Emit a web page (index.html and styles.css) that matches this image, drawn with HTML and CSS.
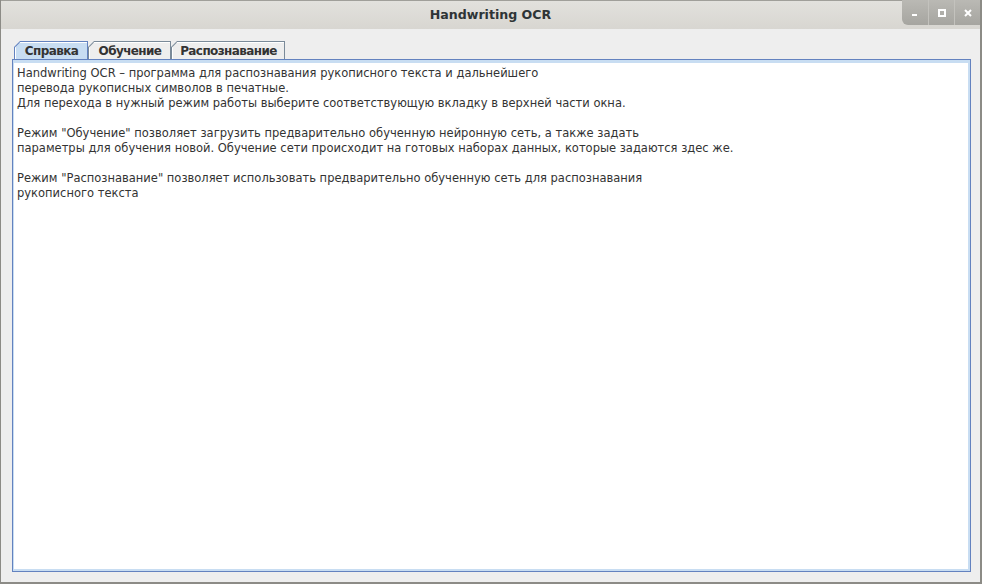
FILE: index.html
```html
<!DOCTYPE html>
<html lang="ru">
<head>
<meta charset="utf-8">
<title>Handwriting OCR</title>
<link rel="stylesheet" href="styles.css">
</head>
<body>
<div class="window">
  <div class="titlebar">
    <span class="title">Handwriting OCR</span>
    <div class="wm-buttons">
      <div class="wm-btn">
        <svg width="8" height="8" viewBox="0 0 8 8"><rect x="1" y="5" width="5" height="2" fill="#fff"/></svg>
      </div>
      <div class="wm-btn">
        <svg width="8" height="8" viewBox="0 0 8 8"><rect x="1" y="1" width="6" height="6" fill="none" stroke="#fff" stroke-width="2"/></svg>
      </div>
      <div class="wm-btn">
        <svg width="8" height="8" viewBox="0 0 8 8"><path d="M1 1L7 7M7 1L1 7" stroke="#fff" stroke-width="2"/></svg>
      </div>
    </div>
  </div>
  <div class="content">
    <div class="tabs">
      <div class="tab tab-selected w1"><div class="tab-inner">Справка</div></div>
      <div class="tab w2"><div class="tab-inner">Обучение</div></div>
      <div class="tab w3"><div class="tab-inner">Распознавание</div></div>
    </div>
    <div class="panel">
      <div class="text">Handwriting OCR – программа для распознавания рукописного текста и дальнейшего
перевода рукописных символов в печатные.
Для перехода в нужный режим работы выберите соответствующую вкладку в верхней части окна.

Режим "Обучение" позволяет загрузить предварительно обученную нейронную сеть, а также задать
параметры для обучения новой. Обучение сети происходит на готовых наборах данных, которые задаются здес же.

Режим "Распознавание" позволяет использовать предварительно обученную сеть для распознавания
рукописного текста</div>
    </div>
  </div>
</div>
</body>
</html>
```
FILE: styles.css
```css
html, body {
  margin: 0;
  padding: 0;
  background: #eeeeee;
}

.window {
  width: 982px;
  height: 584px;
  box-sizing: border-box;
  border-left: 1px solid #8c8b86;
  border-right: 2px solid #8c8b86;
  border-bottom: 2px solid #8c8b86;
  background: #eeeeee;
  display: flex;
  flex-direction: column;
}

.titlebar {
  position: relative;
  height: 29px;
  box-sizing: border-box;
  border-top: 1px solid #a09f9a;
  background: linear-gradient(#e2e1dd, #d8d6d1);
  text-align: center;
  font-family: "DejaVu Sans", sans-serif;
  font-weight: bold;
  font-size: 12.6px;
  line-height: 28px;
  color: #2e3436;
  flex: none;
}

.wm-buttons {
  position: absolute;
  top: -1px;
  right: 0;
  height: 25px;
  display: flex;
  background: linear-gradient(#bab9b4, #a6a5a0);
  border-bottom-left-radius: 6px;
  overflow: hidden;
}

.wm-btn {
  width: 26px;
  height: 25px;
  display: flex;
  align-items: center;
  justify-content: center;
  border-left: 1px solid #c3c2bd;
  box-sizing: border-box;
}

.wm-btn:first-child {
  border-left: none;
}

.wm-btn svg {
  display: block;
}

.content {
  flex: 1;
  display: flex;
  flex-direction: column;
  padding: 12px 9px 10px 11px;
  min-height: 0;
}

.tabs {
  display: flex;
  margin-left: 2px;
  height: 18px;
  flex: none;
}

.tab {
  height: 18px;
  box-sizing: border-box;
  background: #7a8a99;
  padding: 1px 1px 0 1px;
  clip-path: polygon(6px 0, 100% 0, 100% 100%, 0 100%, 0 6px);
}

.w1 { width: 74px; }
.w2 { width: 83px; }
.w3 { width: 114px; }

.tab-inner {
  height: 17px;
  box-sizing: border-box;
  background: #eeeeee;
  border-top: 1px solid #ffffff;
  border-left: 1px solid #ffffff;
  clip-path: polygon(5.4px 0, 100% 0, 100% 100%, 0 100%, 0 5.4px);
  font-family: "DejaVu Sans", sans-serif;
  font-weight: bold;
  font-size: 12px;
  letter-spacing: -0.6px;
  line-height: 16px;
  color: #333333;
  text-align: center;
  white-space: nowrap;
}

.tab-selected {
  background: #6382bf;
}

.tab-selected .tab-inner {
  background: #c8ddf2;
}

.panel {
  flex: 1;
  border: 1px solid #6382bf;
  background: #ffffff;
  box-shadow: inset 1px 3px 0 #c8ddf2, inset -2px -2px 0 #c8ddf2;
  padding: 6px 4px 4px 4px;
  min-height: 0;
}

.text {
  font-family: "DejaVu Sans", sans-serif;
  font-size: 11.5px;
  line-height: 15px;
  color: #333333;
  white-space: pre-line;
}
```
